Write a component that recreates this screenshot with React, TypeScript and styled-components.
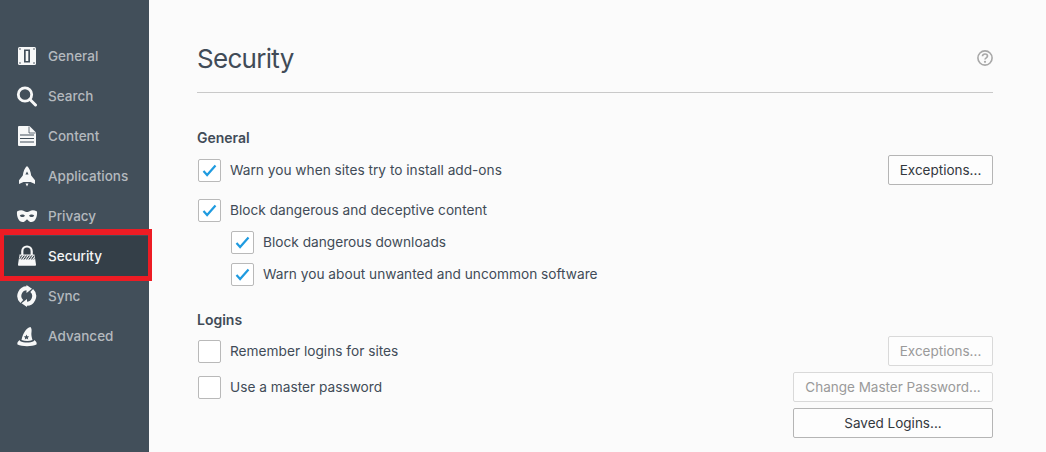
import React from "react";
import styled, { createGlobalStyle } from "styled-components";

const Global = createGlobalStyle`
  html, body { margin: 0; padding: 0; background: #fbfbfb; }
  body { font-family: Inter, "Liberation Sans", sans-serif; overflow: hidden; }
`;

const Page = styled.div`
  display: flex;
  width: 1046px;
  height: 452px;
  overflow: hidden;
  background: #fbfbfb;
`;

const Sidebar = styled.nav`
  width: 149px;
  flex: none;
  background: #424f5a;
  padding-top: 36px;
  box-sizing: border-box;
`;

const NavItem = styled.div<{ $active?: boolean }>`
  position: relative;
  display: flex;
  align-items: center;
  height: 40px;
  padding-left: 16px;
  gap: 10px;
  font-size: 13.5px;
  font-weight: 500;
  color: ${(p) => (p.$active ? "#f4f6f7" : "#b4b9be")};
  background: ${(p) => (p.$active ? "#343f48" : "transparent")};
`;

const Highlight = styled.div`
  position: absolute;
  left: 0;
  top: -7px;
  width: 152px;
  height: 52px;
  box-sizing: border-box;
  border-style: solid;
  border-color: #ed1c24;
  border-width: 6px 4px 5px 4px;
  pointer-events: none;
`;

const Main = styled.main`
  flex: 1;
  padding: 36px 53px 0 48px;
  color: #414b57;
  min-width: 0;
`;

const Header = styled.header`
  display: flex;
  align-items: center;
  justify-content: space-between;
  height: 44px;
  padding-bottom: 12px;
  border-bottom: 1px solid #c9c9c9;
`;

const Title = styled.h1`
  margin: 0;
  font-size: 26px;
  font-weight: 400;
  letter-spacing: -0.7px;
  color: #414b57;
`;

const Section = styled.section<{ $top: number }>`
  margin-top: ${(p) => p.$top}px;
`;

const SectionTitle = styled.h2`
  margin: 0;
  height: 20px;
  line-height: 20px;
  font-size: 14px;
  font-weight: 600;
  color: #414b57;
`;

const Row = styled.div<{ $indent?: boolean; $top: number }>`
  display: flex;
  align-items: center;
  height: 32px;
  margin-top: ${(p) => p.$top}px;
  padding-left: ${(p) => (p.$indent ? 34 : 1)}px;
`;

const Box = styled.span`
  width: 23px;
  height: 23px;
  box-sizing: border-box;
  flex: none;
  border: 1px solid #b9b9b9;
  border-radius: 2px;
  background: #fff;
  display: flex;
  align-items: center;
  justify-content: center;
`;

const Label = styled.span`
  margin-left: 9px;
  font-size: 13.7px;
  color: #414b57;
`;

const Spacer = styled.span`
  flex: 1;
`;

const Button = styled.button<{ $width: number; $disabled?: boolean }>`
  width: ${(p) => p.$width}px;
  height: 30px;
  padding: 0;
  box-sizing: border-box;
  background: #fdfdfd;
  border: 1px solid ${(p) => (p.$disabled ? "#d9d9d9" : "#b5b5b5")};
  border-radius: 2px;
  font-family: inherit;
  font-size: 13.5px;
  color: ${(p) => (p.$disabled ? "#9a9a9a" : "#33383e")};
`;

const Check = () => (
  <svg width="15" height="13" viewBox="0 0 15 13">
    <path d="M1.5 7l3.6 4L13.5 1.5" fill="none" stroke="#1f9be0" strokeWidth="2.2" />
  </svg>
);

const ic = { width: 22, height: 22, viewBox: "0 0 22 22" };
const W = "#f7f8f8";
const D = "#424f5a";
const A = "#343f48";

const GeneralIcon = () => (
  <svg {...ic}>
    <rect x="2" y="2" width="18" height="18" rx="1.5" fill={W} />
    <rect x="8" y="4.500" width="6" height="13" fill={D} />
    <rect x="9.700" y="6" width="2.600" height="10" fill={W} />
    <g fill={D}>
      <circle cx="4" cy="4" r=".8" /><circle cx="18" cy="4" r=".8" />
      <circle cx="4" cy="18" r=".8" /><circle cx="18" cy="18" r=".8" />
    </g>
  </svg>
);
const SearchIcon = () => (
  <svg {...ic}>
    <circle cx="9" cy="9.500" r="6.700" fill="none" stroke={W} strokeWidth="2.800" />
    <path d="M14 14.500l5.500 5.500" stroke={W} strokeWidth="3" strokeLinecap="round" />
  </svg>
);
const ContentIcon = () => (
  <svg {...ic}>
    <path d="M3 1h10.500L20 7.500V20a1 1 0 0 1-1 1H3a1 1 0 0 1-1-1V2a1 1 0 0 1 1-1z" fill={W} />
    <path d="M13 1.500V8h6.500" fill="none" stroke={D} strokeWidth=".8" />
    <path d="M4 10h14M4 13.500h14M4 17h14" stroke={D} strokeWidth="1.100" />
  </svg>
);
const AppsIcon = () => (
  <svg {...ic}>
    <path d="M11 1c2.300 2.200 3.800 5.500 4.200 9.500l3.800 4.700V19l-4.500-2h-7L3 19v-3.800l3.800-4.700C7.200 6.500 8.700 3.200 11 1z" fill={W} />
    <path d="M9.400 9.500L11 6.500l1.600 3z" fill={D} />
    <path d="M9.500 18.500h3L11 21.500z" fill={W} />
  </svg>
);
const PrivacyIcon = () => (
  <svg {...ic}>
    <path fillRule="evenodd" fill={W} d="M1 6.500C3.500 5 6.500 5 8 6c1.200.8 2 1 3 1s1.800-.2 3-1c1.500-1 4.500-1 7 .5.500 5.500-1.800 10.500-5.800 10.500-2.600 0-3.200-2.500-4.200-2.500s-1.600 2.500-4.200 2.500C2.800 17 .5 12 1 6.500zM3.800 10.500c1 2 4 2 5.200.3-1.100-1.600-4-1.700-5.200-.3zm9.200.3c1.200 1.700 4.200 1.700 5.200-.3-1.200-1.400-4.100-1.300-5.200.3z" />
  </svg>
);
const SecurityIcon = () => (
  <svg {...ic}>
    <defs>
      <pattern id="hatch" width="2.500" height="4" patternUnits="userSpaceOnUse" patternTransform="skewX(-35)">
        <rect width="1.300" height="4" fill={A} />
      </pattern>
    </defs>
    <path d="M6.300 11V6.200a4.700 4.700 0 0 1 9.400 0V11" fill="none" stroke={W} strokeWidth="2.200" />
    <path d="M3.500 9.500h15l1.500 10a1 1 0 0 1-1 1.200H3a1 1 0 0 1-1-1.200z" fill={W} />
    <rect x="3.500" y="10.500" width="15" height="4" fill="url(#hatch)" />
  </svg>
);
const SyncIcon = () => (
  <svg {...ic}>
    <path d="M12 3.400A7.600 7.600 0 0 0 5.800 16.500" fill="none" stroke={W} strokeWidth="4" />
    <path d="M10.500 0L16 3.800 10.500 8z" fill={W} />
    <path d="M9.500 18.600A7.600 7.600 0 0 0 15.700 5.500" fill="none" stroke={W} strokeWidth="4" />
    <path d="M11 14l-5.500 4.200 5.500 3.800z" fill={W} />
  </svg>
);
const AdvancedIcon = () => (
  <svg {...ic}>
    <path d="M14.500 2C10 3 7 8.500 5.500 15c3.500 1.300 8 1.300 11 0-.8-3-1.500-5-1-8 .2-1.600.3-3.500-1-5z" fill={W} />
    <path d="M3.700 15C1.500 16.500 1 18 1.500 19.500c4.500 2.300 14.500 2.300 19 0 .5-1.500 0-3-2.200-4.500l-.3 1c-4 2-10 2-14 0z" fill={W} />
    <path d="M10.500 9.500l.8 1.700 1.900.2-1.400 1.300.4 1.900-1.700-1-1.700 1 .4-1.900-1.400-1.300 1.900-.2z" fill={D} />
  </svg>
);

const HelpIcon = () => (
  <svg width="16" height="16" viewBox="0 0 16 16">
    <circle cx="8" cy="8" r="7.100" fill="none" stroke="#a8a8a8" strokeWidth="1.600" />
    <path d="M5.500 6.200c0-1.400 1.100-2.200 2.500-2.200s2.500.8 2.500 2.100c0 1.800-2.500 1.700-2.500 3.500" fill="none" stroke="#a8a8a8" strokeWidth="1.700" />
    <circle cx="8" cy="11.800" r="1.100" fill="#a8a8a8" />
  </svg>
);

const items = [
  { name: "General", icon: <GeneralIcon /> },
  { name: "Search", icon: <SearchIcon /> },
  { name: "Content", icon: <ContentIcon /> },
  { name: "Applications", icon: <AppsIcon /> },
  { name: "Privacy", icon: <PrivacyIcon /> },
  { name: "Security", icon: <SecurityIcon />, active: true },
  { name: "Sync", icon: <SyncIcon /> },
  { name: "Advanced", icon: <AdvancedIcon /> },
];

export default function App() {
  return (
    <Page>
      <Global />
      <Sidebar>
        {items.map((it) => (
          <NavItem key={it.name} $active={it.active}>
            {it.icon}
            {it.name}
            {it.active && <Highlight />}
          </NavItem>
        ))}
      </Sidebar>
      <Main>
        <Header>
          <Title>Security</Title>
          <HelpIcon />
        </Header>
        <Section $top={35}>
          <SectionTitle>General</SectionTitle>
          <Row $top={6}>
            <Box><Check /></Box>
            <Label>Warn you when sites try to install add-ons</Label>
            <Spacer />
            <Button $width={105}>Exceptions...</Button>
          </Row>
          <Row $top={8}>
            <Box><Check /></Box>
            <Label>Block dangerous and deceptive content</Label>
          </Row>
          <Row $indent $top={0}>
            <Box><Check /></Box>
            <Label>Block dangerous downloads</Label>
          </Row>
          <Row $indent $top={0}>
            <Box><Check /></Box>
            <Label>Warn you about unwanted and uncommon software</Label>
          </Row>
        </Section>
        <Section $top={20}>
          <SectionTitle>Logins</SectionTitle>
          <Row $top={5}>
            <Box />
            <Label>Remember logins for sites</Label>
            <Spacer />
            <Button $width={105} $disabled>Exceptions...</Button>
          </Row>
          <Row $top={4}>
            <Box />
            <Label>Use a master password</Label>
            <Spacer />
            <Button $width={200} $disabled>Change Master Password...</Button>
          </Row>
          <Row $top={4}>
            <Spacer />
            <Button $width={200}>Saved Logins...</Button>
          </Row>
        </Section>
      </Main>
    </Page>
  );
}
